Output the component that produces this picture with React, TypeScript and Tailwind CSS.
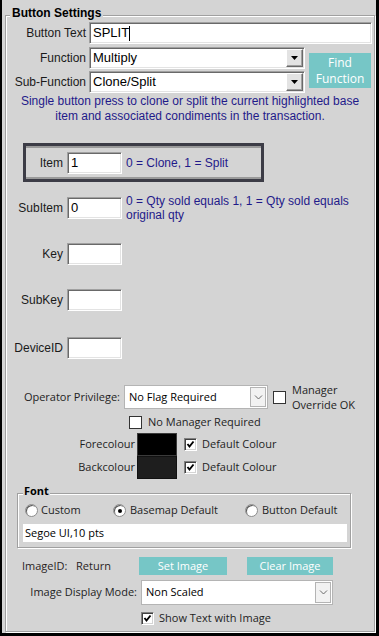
import type { ReactNode } from 'react';

const sunken =
  'bg-white border border-t-[#a0a0a0] border-l-[#a0a0a0] border-b-white border-r-white shadow-[inset_1px_1px_0_#696969,inset_-1px_-1px_0_#e3e3e3]';
const raised =
  'bg-[#e3e3e3] border border-t-white border-l-white border-b-[#696969] border-r-[#696969] shadow-[inset_-1px_-1px_0_#a0a0a0]';

function Label({ children, className = '' }: { children: ReactNode; className?: string }) {
  return (
    <div className={`flex items-center justify-end whitespace-nowrap text-[12px] text-[#1a1a1a] ${className}`}>
      {children}
    </div>
  );
}

function Field({ children, className = '' }: { children?: ReactNode; className?: string }) {
  return (
    <div className={`h-[22px] flex items-center pl-[3px] text-[13px] text-black ${sunken} ${className}`}>
      {children}
    </div>
  );
}

function ClassicCombo({ value }: { value: string }) {
  return (
    <div className={`ml-[3px] w-[216px] h-[22px] flex items-center ${sunken}`}>
      <span className="flex-1 pl-[3px] text-[13px] text-black">{value}</span>
      <div className={`mr-[1px] w-[17px] h-[18px] flex items-center justify-center ${raised}`}>
        <svg width="7" height="4" viewBox="0 0 7 4">
          <polygon points="0,0 7,0 3.5,4" fill="#000" />
        </svg>
      </div>
    </div>
  );
}

function FlatCombo({ value, className = '' }: { value: string; className?: string }) {
  return (
    <div className={`flex items-center bg-white border border-[#b4b4b4] ${className}`}>
      <span className="flex-1 pl-[4px] text-[11px] text-black">{value}</span>
      <div className="mr-[1px] w-[16px] h-[calc(100%-2px)] flex items-center justify-center border border-[#b4b4b4] bg-[#f2f2f2]">
        <svg width="9" height="5" viewBox="0 0 9 5">
          <path d="M1 0.5 L4.5 4 L8 0.5" stroke="#6a6a6a" strokeWidth="1" fill="none" />
        </svg>
      </div>
    </div>
  );
}

function Check({ checked = false }: { checked?: boolean }) {
  if (!checked) {
    return <span className="block w-[13px] h-[13px] shrink-0 bg-white border border-[#333]" />;
  }
  return (
    <span className="w-[13px] h-[13px] shrink-0 flex items-center justify-center bg-white border border-t-[#808080] border-l-[#808080] border-b-white border-r-white shadow-[inset_1px_1px_0_#404040,inset_-1px_-1px_0_#d4d4d4]">
      <svg width="9" height="9" viewBox="0 0 9 9">
        <path d="M1.5 4 L3.5 6.5 L7.5 1.5" stroke="#000" strokeWidth="1.9" fill="none" />
      </svg>
    </span>
  );
}

function Radio({ checked = false }: { checked?: boolean }) {
  return (
    <span className="w-[13px] h-[13px] shrink-0 rounded-full bg-white border border-[#8c8c8c] shadow-[inset_1px_1px_0_#5a5a5a] flex items-center justify-center">
      {checked && <span className="w-[4px] h-[4px] rounded-full bg-black" />}
    </span>
  );
}

export default function App() {
  return (
    <div className="w-[379px] h-[636px] bg-[#d4d4d4] border-l-2 border-r-[3px] border-b-[3px] border-black overflow-hidden font-['Liberation_Sans',Arial,sans-serif]">
      {/* Button Settings group */}
      <div className="relative ml-[3px] mt-[15px] w-[370px] h-[617px] border border-[#a0a0a0] shadow-[inset_1px_1px_0_#fff,1px_1px_0_#fff]">
        <span className="absolute left-[4px] -top-[11px] px-[2px] bg-[#d4d4d4] text-[12px] leading-[16px] font-bold text-black">
          Button Settings
        </span>

        <div className="flex flex-col">
          {/* Button Text */}
          <div className="flex items-center mt-[6px]">
            <Label className="w-[80px]">Button Text</Label>
            <Field className="ml-[3px] w-[283px] pl-[2px]">
              SPLIT<span className="w-px h-[15px] bg-black" />
            </Field>
          </div>

          {/* Function / Sub-Function + Find Function */}
          <div className="flex mt-[3px]">
            <div className="flex flex-col gap-[2px]">
              <div className="flex items-center">
                <Label className="w-[80px]">Function</Label>
                <ClassicCombo value="Multiply" />
              </div>
              <div className="flex items-center">
                <Label className="w-[80px]">Sub-Function</Label>
                <ClassicCombo value="Clone/Split" />
              </div>
            </div>
            <button className="ml-[4px] mt-[6px] w-[62px] h-[35px] bg-[#76c6c6] text-white text-[12px] leading-[16px] font-['Open_Sans',sans-serif]">
              Find
              <br />
              Function
            </button>
          </div>

          <p className="mt-[1px] text-center whitespace-nowrap text-[12px] leading-[15px] text-[#1f1a8a]">
            Single button press to clone or split the current highlighted base
            <br />
            item and associated condiments in the transaction.
          </p>

          {/* Item box */}
          <div className="mt-[19px] ml-[17px] w-[241px] h-[39px] flex items-center border-[3px] border-[#3c3c46] shadow-[inset_0_2px_0_#9a9a9a,inset_0_-2px_0_#9a9a9a]">
            <Label className="w-[37px]">Item</Label>
            <Field className="ml-[4px] w-[55px]">1</Field>
            <span className="ml-[4px] text-[12px] text-[#1f1a8a]">0 = Clone, 1 = Split</span>
          </div>

          {/* SubItem */}
          <div className="mt-[15px] h-[22px] flex items-start">
            <Label className="w-[57px] h-[22px]">SubItem</Label>
            <Field className="ml-[4px] w-[55px]">0</Field>
            <p className="ml-[4px] -mt-[3px] whitespace-nowrap text-[12px] leading-[14px] text-[#1f1a8a]">
              0 = Qty sold equals 1, 1 = Qty sold equals
              <br />
              original qty
            </p>
          </div>

          <div className="mt-[24px] flex items-center">
            <Label className="w-[57px]">Key</Label>
            <Field className="ml-[4px] w-[55px]" />
          </div>
          <div className="mt-[24px] flex items-center">
            <Label className="w-[57px]">SubKey</Label>
            <Field className="ml-[4px] w-[55px]" />
          </div>
          <div className="mt-[26px] flex items-center">
            <Label className="w-[57px]">DeviceID</Label>
            <Field className="ml-[4px] w-[55px]" />
          </div>

          {/* Lower section */}
          <div className="flex flex-col font-['Open_Sans',sans-serif] text-[11px] text-[#1e1e1e]">
            <div className="mt-[26px] flex items-start">
              <div className="w-[114px] h-[24px] flex items-center justify-end whitespace-nowrap">Operator Privilege:</div>
              <FlatCombo value="No Flag Required" className="ml-[4px] w-[144px] h-[24px]" />
              <span className="ml-[5px] mt-[6px] flex">
                <Check />
              </span>
              <p className="ml-[6px] -mt-[3px] leading-[15px] whitespace-nowrap">
                Manager
                <br />
                Override OK
              </p>
            </div>

            <div className="mt-[4px] ml-[123px] flex items-center gap-[6px] h-[13px]">
              <Check />
              <span className="whitespace-nowrap">No Manager Required</span>
            </div>

            <div className="mt-[4px] flex items-center">
              <div className="w-[129px] text-right">Forecolour</div>
              <div className="ml-[2px] w-[40px] h-[23px] bg-black border border-[#3a3a3a]" />
              <span className="ml-[7px] flex">
                <Check checked />
              </span>
              <span className="ml-[5px]">Default Colour</span>
            </div>
            <div className="flex items-center">
              <div className="w-[129px] text-right">Backcolour</div>
              <div className="ml-[2px] w-[40px] h-[23px] bg-[#1e1e1e] border border-[#111]" />
              <span className="ml-[7px] flex">
                <Check checked />
              </span>
              <span className="ml-[5px]">Default Colour</span>
            </div>

            {/* Font group */}
            <div className="relative mt-[14px] ml-[11px] w-[334px] h-[55px] border border-[#a0a0a0] shadow-[inset_1px_1px_0_#fff,1px_1px_0_#fff]">
              <span className="absolute left-[5px] -top-[11px] px-[1px] bg-[#d4d4d4] font-bold leading-[16px] text-black">
                Font
              </span>
              <div className="mt-[10px] flex items-center h-[13px]">
                <div className="ml-[7px] w-[88px] flex items-center gap-[3px]">
                  <Radio />
                  <span>Custom</span>
                </div>
                <div className="w-[132px] flex items-center gap-[4px]">
                  <Radio checked />
                  <span className="whitespace-nowrap">Basemap Default</span>
                </div>
                <div className="flex items-center gap-[4px]">
                  <Radio />
                  <span className="whitespace-nowrap">Button Default</span>
                </div>
              </div>
              <div className="mt-[7px] ml-[5px] w-[324px] h-[18px] bg-white pl-[2px] leading-[18px] text-black">
                Segoe UI,10 pts
              </div>
            </div>

            {/* Image */}
            <div className="mt-[9px] h-[18px] flex items-center">
              <span className="ml-[16px] w-[54px] text-[#2a1e1e]">ImageID:</span>
              <span className="w-[63px] text-[#2a1e1e]">Return</span>
              <button className="w-[88px] h-[18px] bg-[#76c6c6] text-white text-[11px]">Set Image</button>
              <button className="ml-[20px] w-[86px] h-[18px] bg-[#76c6c6] text-white text-[11px]">Clear Image</button>
            </div>

            <div className="mt-[5px] flex items-center">
              <div className="w-[131px] text-right whitespace-nowrap">Image Display Mode:</div>
              <FlatCombo value="Non Scaled" className="ml-[4px] w-[192px] h-[25px]" />
            </div>

            <div className="mt-[5px] ml-[135px] flex items-center gap-[5px]">
              <Check checked />
              <span className="whitespace-nowrap">Show Text with Image</span>
            </div>
          </div>
        </div>
      </div>
    </div>
  );
}
